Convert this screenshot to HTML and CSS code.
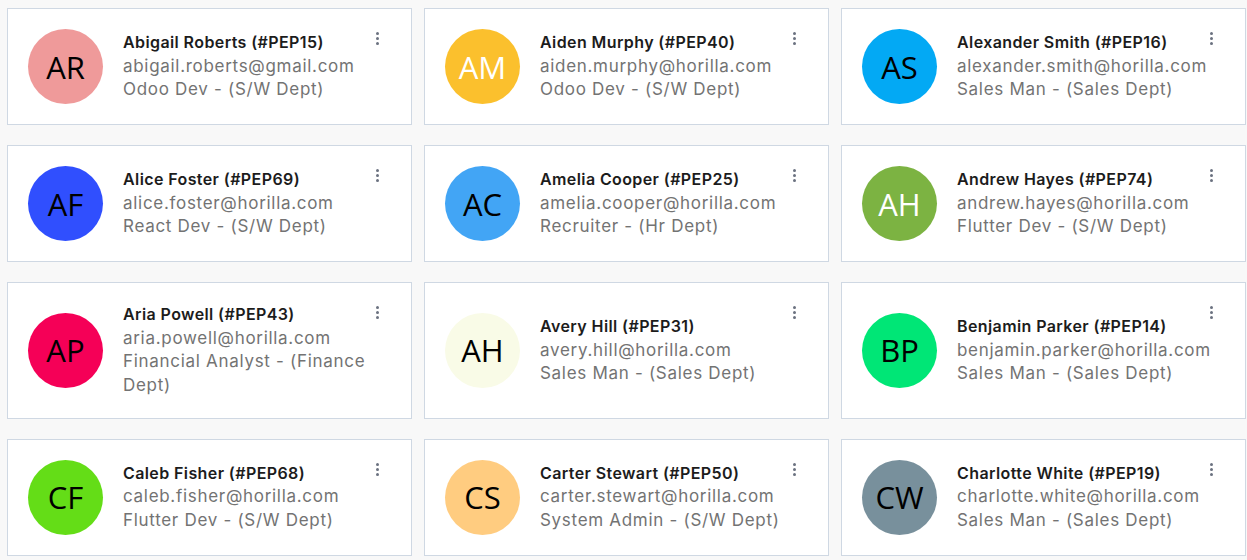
FILE: index.html
```html
<!DOCTYPE html>
<html>
<head>
<meta charset="utf-8">
<link rel="stylesheet" href="styles.css">
</head>
<body>
<div class="grid">
  <div class="card">
    <div class="avatar" style="background:#ef9a9a">AR</div>
    <div class="details"><div class="name">Abigail Roberts (#PEP15)</div><div class="sub">abigail.roberts@gmail.com</div><div class="sub">Odoo Dev - (S/W Dept)</div></div>
    <span class="dots"><i></i><i></i><i></i></span>
  </div>
  <div class="card">
    <div class="avatar light" style="background:#fbc02d">AM</div>
    <div class="details"><div class="name">Aiden Murphy (#PEP40)</div><div class="sub">aiden.murphy@horilla.com</div><div class="sub">Odoo Dev - (S/W Dept)</div></div>
    <span class="dots"><i></i><i></i><i></i></span>
  </div>
  <div class="card">
    <div class="avatar" style="background:#03a9f4">AS</div>
    <div class="details"><div class="name">Alexander Smith (#PEP16)</div><div class="sub">alexander.smith@horilla.com</div><div class="sub">Sales Man - (Sales Dept)</div></div>
    <span class="dots"><i></i><i></i><i></i></span>
  </div>
  <div class="card">
    <div class="avatar" style="background:#304ffe">AF</div>
    <div class="details"><div class="name">Alice Foster (#PEP69)</div><div class="sub">alice.foster@horilla.com</div><div class="sub">React Dev - (S/W Dept)</div></div>
    <span class="dots"><i></i><i></i><i></i></span>
  </div>
  <div class="card">
    <div class="avatar" style="background:#42a5f5">AC</div>
    <div class="details"><div class="name">Amelia Cooper (#PEP25)</div><div class="sub">amelia.cooper@horilla.com</div><div class="sub">Recruiter - (Hr Dept)</div></div>
    <span class="dots"><i></i><i></i><i></i></span>
  </div>
  <div class="card">
    <div class="avatar light" style="background:#7cb342">AH</div>
    <div class="details"><div class="name">Andrew Hayes (#PEP74)</div><div class="sub">andrew.hayes@horilla.com</div><div class="sub">Flutter Dev - (S/W Dept)</div></div>
    <span class="dots"><i></i><i></i><i></i></span>
  </div>
  <div class="card">
    <div class="avatar" style="background:#f50057">AP</div>
    <div class="details"><div class="name">Aria Powell (#PEP43)</div><div class="sub">aria.powell@horilla.com</div><div class="sub">Financial Analyst - (Finance Dept)</div></div>
    <span class="dots"><i></i><i></i><i></i></span>
  </div>
  <div class="card">
    <div class="avatar" style="background:#f9fbe7">AH</div>
    <div class="details"><div class="name">Avery Hill (#PEP31)</div><div class="sub">avery.hill@horilla.com</div><div class="sub">Sales Man - (Sales Dept)</div></div>
    <span class="dots"><i></i><i></i><i></i></span>
  </div>
  <div class="card">
    <div class="avatar" style="background:#00e676">BP</div>
    <div class="details"><div class="name">Benjamin Parker (#PEP14)</div><div class="sub">benjamin.parker@horilla.com</div><div class="sub">Sales Man - (Sales Dept)</div></div>
    <span class="dots"><i></i><i></i><i></i></span>
  </div>
  <div class="card">
    <div class="avatar" style="background:#64dd17">CF</div>
    <div class="details"><div class="name">Caleb Fisher (#PEP68)</div><div class="sub">caleb.fisher@horilla.com</div><div class="sub">Flutter Dev - (S/W Dept)</div></div>
    <span class="dots"><i></i><i></i><i></i></span>
  </div>
  <div class="card">
    <div class="avatar" style="background:#ffcc80">CS</div>
    <div class="details"><div class="name">Carter Stewart (#PEP50)</div><div class="sub">carter.stewart@horilla.com</div><div class="sub">System Admin - (S/W Dept)</div></div>
    <span class="dots"><i></i><i></i><i></i></span>
  </div>
  <div class="card">
    <div class="avatar" style="background:#78909c">CW</div>
    <div class="details"><div class="name">Charlotte White (#PEP19)</div><div class="sub">charlotte.white@horilla.com</div><div class="sub">Sales Man - (Sales Dept)</div></div>
    <span class="dots"><i></i><i></i><i></i></span>
  </div>
</div>
</body>
</html>
```
FILE: styles.css
```css
html, body { margin: 0; padding: 0; background: #f8f8f8; }
body { font-family: "Inter", "Liberation Sans", sans-serif; }
.grid {
  display: grid;
  grid-template-columns: repeat(3, 405px);
  column-gap: 12px;
  row-gap: 20px;
  padding: 8px 0 0 7px;
}
.card {
  position: relative;
  background: #fff;
  border: 1px solid #cfd8e3;
  display: flex;
  align-items: center;
  padding: 20px;
  min-height: 75px;
}
.avatar {
  flex: 0 0 75px;
  width: 75px;
  height: 75px;
  border-radius: 50%;
  display: flex;
  align-items: center;
  justify-content: center;
  font-family: "Open Sans", "Noto Sans", sans-serif;
  font-size: 31px;
  color: #000;
}
.avatar.light { color: #fff; }
.details {
  margin-left: 20px;
  padding-right: 18px;
  flex: 1;
  min-width: 0;
}
.name {
  font-weight: 600;
  font-size: 16px;
  letter-spacing: 0.4px;
  line-height: 23.7px;
  color: #1c1c1c;
}
.sub {
  font-size: 17px;
  letter-spacing: 0.7px;
  line-height: 23.7px;
  color: #737373;
}
.dots {
  position: absolute;
  top: 23px;
  right: 32px;
  display: flex;
  flex-direction: column;
  gap: 2px;
}
.dots i {
  display: block;
  width: 3px;
  height: 3px;
  border-radius: 50%;
  background: #6b7280;
}
```
